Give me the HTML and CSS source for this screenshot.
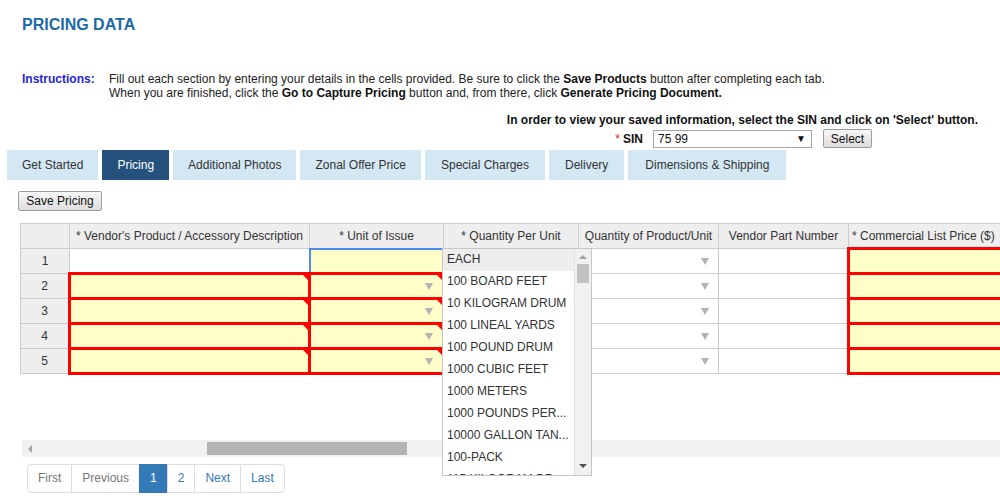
FILE: index.html
```html
<!DOCTYPE html>
<html>
<head>
<meta charset="utf-8">
<title>Pricing Data</title>
<link rel="stylesheet" href="styles.css">
</head>
<body>
<h1 class="title">PRICING DATA</h1>

<div class="instructions">
  <div class="instr-label">Instructions:</div>
  <div class="instr-text">Fill out each section by entering your details in the cells provided. Be sure to click the <b>Save Products</b> button after completing each tab.<br>When you are finished, click the <b>Go to Capture Pricing</b> button and, from there, click <b>Generate Pricing Document.</b></div>
</div>

<div class="view-note">In order to view your saved information, select the SIN and click on 'Select' button.</div>
<div class="sin-row">
  <span class="req-star">*</span><span class="sin-label">SIN</span>
  <div class="fake-select"><span>75 99</span><span class="sel-arrow">&#9660;</span></div>
  <button class="btn select-btn">Select</button>
</div>

<nav class="tabs">
  <div class="tab">Get Started</div>
  <div class="tab active">Pricing</div>
  <div class="tab">Additional Photos</div>
  <div class="tab">Zonal Offer Price</div>
  <div class="tab wide">Special Charges</div>
  <div class="tab wide">Delivery</div>
  <div class="tab wider">Dimensions &amp; Shipping</div>
</nav>

<button class="btn save-btn">Save Pricing</button>

<div class="grid">
  <div class="grid-view">
    <table>
      <colgroup>
        <col class="c-num"><col class="c-desc"><col class="c-unit"><col class="c-qpu"><col class="c-qpp"><col class="c-vpn"><col class="c-price">
      </colgroup>
      <thead>
        <tr>
          <th></th>
          <th>* Vendor's Product / Accessory Description</th>
          <th>* Unit of Issue</th>
          <th>* Quantity Per Unit</th>
          <th>Quantity of Product/Unit</th>
          <th>Vendor Part Number</th>
          <th>* Commercial List Price ($)</th>
        </tr>
      </thead>
      <tbody>
        <tr>
          <td class="num">1</td>
          <td></td>
          <td class="sel"></td>
          <td></td>
          <td><div class="dd-cell"><span class="dd-arrow"></span></div></td>
          <td></td>
          <td class="req"></td>
        </tr>
        <tr>
          <td class="num">2</td>
          <td class="req"></td>
          <td class="req"><div class="dd-cell"><span class="dd-arrow"></span></div></td>
          <td></td>
          <td><div class="dd-cell"><span class="dd-arrow"></span></div></td>
          <td></td>
          <td class="req"></td>
        </tr>
        <tr>
          <td class="num">3</td>
          <td class="req"></td>
          <td class="req"><div class="dd-cell"><span class="dd-arrow"></span></div></td>
          <td></td>
          <td><div class="dd-cell"><span class="dd-arrow"></span></div></td>
          <td></td>
          <td class="req"></td>
        </tr>
        <tr>
          <td class="num">4</td>
          <td class="req"></td>
          <td class="req"><div class="dd-cell"><span class="dd-arrow"></span></div></td>
          <td></td>
          <td><div class="dd-cell"><span class="dd-arrow"></span></div></td>
          <td></td>
          <td class="req"></td>
        </tr>
        <tr>
          <td class="num">5</td>
          <td class="req"></td>
          <td class="req"><div class="dd-cell"><span class="dd-arrow"></span></div></td>
          <td></td>
          <td><div class="dd-cell"><span class="dd-arrow"></span></div></td>
          <td></td>
          <td class="req"></td>
        </tr>
      </tbody>
    </table>
  </div>
  <div class="hscroll"><span class="hs-arrow"></span><div class="hs-thumb"></div></div>

  <div class="dropdown">
    <ul class="dd-list">
      <li class="dd-item hl">EACH</li>
      <li class="dd-item">100 BOARD FEET</li>
      <li class="dd-item">10 KILOGRAM DRUM</li>
      <li class="dd-item">100 LINEAL YARDS</li>
      <li class="dd-item">100 POUND DRUM</li>
      <li class="dd-item">1000 CUBIC FEET</li>
      <li class="dd-item">1000 METERS</li>
      <li class="dd-item">1000 POUNDS PER...</li>
      <li class="dd-item">10000 GALLON TAN...</li>
      <li class="dd-item">100-PACK</li>
      <li class="dd-item">115 KILOGRAM DR...</li>
    </ul>
    <div class="dd-scroll">
      <span class="vs-up"></span>
      <span class="vs-thumb"></span>
      <span class="vs-down"></span>
    </div>
  </div>
</div>

<ul class="pager">
  <li><span class="pg disabled first">First</span></li>
  <li><span class="pg disabled">Previous</span></li>
  <li><span class="pg active">1</span></li>
  <li><span class="pg">2</span></li>
  <li><span class="pg">Next</span></li>
  <li><span class="pg last">Last</span></li>
</ul>
</body>
</html>
```

FILE: styles.css
```css
* { box-sizing: border-box; }

html, body { overflow: hidden; }

body {
  margin: 0;
  font-family: "Liberation Sans", Arial, sans-serif;
  font-size: 12px;
  color: #333;
  background: #fff;
}

.title {
  margin: 0;
  padding: 15px 22px 0;
  font-size: 16px;
  line-height: 20px;
  font-weight: bold;
  color: #1b6aa6;
}

.instructions {
  display: flex;
  margin-top: 37px;
  padding-left: 22px;
  line-height: 14px;
}

.instr-label {
  width: 87px;
  flex: none;
  color: #2525d9;
  font-weight: bold;
}

.instr-text { color: #222; }
.instr-text b { color: #111; }

.view-note {
  margin-top: 13px;
  padding-right: 22px;
  text-align: right;
  font-weight: bold;
  color: #111;
  line-height: 14px;
}

.sin-row {
  display: flex;
  justify-content: flex-end;
  align-items: center;
  height: 19px;
  margin-top: 2px;
  padding-right: 128px;
}

.req-star { color: #e02020; margin-right: 3px; }
.sin-label { font-weight: bold; color: #111; margin-right: 10px; }

.fake-select {
  width: 159px;
  height: 18px;
  border: 1px solid #a6a6a6;
  background: #fff;
  display: flex;
  align-items: center;
  justify-content: space-between;
  padding: 0 5px 0 4px;
  color: #111;
}

.sel-arrow { font-size: 10px; color: #111; }

.btn {
  font-family: inherit;
  font-size: 12px;
  color: #111;
  border: 1px solid #9d9d9d;
  border-radius: 2px;
  background: linear-gradient(#f7f7f7, #dddddd);
  padding: 0;
}

.select-btn { width: 49px; height: 19px; margin-left: 11px; }

.tabs {
  display: flex;
  gap: 4px;
  margin-top: 2px;
  padding-left: 7px;
}

.tab {
  height: 30px;
  line-height: 30px;
  padding: 0 15px;
  background: #d4e8f4;
  color: #333;
}

.tab.wide { padding: 0 16px; }
.tab.wider { padding: 0 17px; }

.tab.active { background: #24527c; color: #fff; }

.save-btn {
  display: block;
  margin: 11px 0 0 18px;
  width: 84px;
  height: 20px;
}

.grid {
  position: relative;
  margin: 12px 0 0 20px;
  height: 234px;
  display: flex;
  flex-direction: column;
}

.grid-view { flex: 1; overflow: hidden; }

table {
  border-collapse: collapse;
  table-layout: fixed;
  width: 1010px;
}

.c-num { width: 49px; }
.c-desc { width: 240px; }
.c-unit { width: 134px; }
.c-qpu { width: 135px; }
.c-qpp { width: 140px; }
.c-vpn { width: 130px; }
.c-price { width: 182px; }

th {
  height: 25px;
  background: #eee;
  border: 1px solid #ccc;
  font-weight: normal;
  color: #333;
  padding: 0 3px;
  white-space: nowrap;
  overflow: hidden;
  text-align: center;
}

th:last-child { text-align: left; }

td {
  height: 25px;
  border: 1px solid #ccc;
  padding: 0;
  background: #fff;
}

td.num { background: #eee; text-align: center; color: #333; }

td.req {
  position: relative;
  background: #fffdc8;
  border: 3px solid #ff0000;
}

td.req::after {
  content: "";
  position: absolute;
  top: 0;
  right: 0;
  border-top: 5px solid #ff0000;
  border-left: 5px solid transparent;
}

td.sel {
  background: #fffdc8;
  border: 2px solid #4a8ee8;
}

.dd-cell {
  display: flex;
  justify-content: flex-end;
  align-items: center;
  height: 100%;
  padding-right: 9px;
}

.dd-arrow {
  width: 0;
  height: 0;
  border-left: 4px solid transparent;
  border-right: 4px solid transparent;
  border-top: 7px solid #b3b3b3;
}

.hscroll {
  height: 17px;
  margin-left: 2px;
  background: #f1f1f1;
  display: flex;
  align-items: center;
}

.hs-arrow {
  margin-left: 6px;
  width: 0;
  height: 0;
  border-top: 4px solid transparent;
  border-bottom: 4px solid transparent;
  border-right: 4px solid #a3a3a3;
}

.hs-thumb {
  margin-left: 175px;
  width: 200px;
  height: 13px;
  background: #b3b3b3;
}

.dropdown {
  position: absolute;
  left: 422px;
  top: 25px;
  width: 150px;
  height: 228px;
  border: 1px solid #c6c6c6;
  background: #fff;
  display: flex;
  overflow: hidden;
}

.dd-list {
  flex: 1;
  margin: 0;
  padding: 0;
  list-style: none;
  overflow: hidden;
}

.dd-item {
  height: 22px;
  line-height: 20px;
  padding-left: 4px;
  white-space: nowrap;
  color: #333;
}

.dd-item.hl { background: #eee; }

.dd-scroll {
  width: 17px;
  flex: none;
  background: #f1f1f1;
  border-left: 1px solid #e2e2e2;
  display: flex;
  flex-direction: column;
  align-items: center;
}

.vs-up {
  margin-top: 6px;
  width: 0;
  height: 0;
  border-left: 4px solid transparent;
  border-right: 4px solid transparent;
  border-bottom: 4px solid #a3a3a3;
}

.vs-thumb {
  margin-top: 5px;
  width: 12px;
  height: 19px;
  background: #c1c1c1;
}

.vs-down {
  margin-top: auto;
  margin-bottom: 7px;
  width: 0;
  height: 0;
  border-left: 4px solid transparent;
  border-right: 4px solid transparent;
  border-top: 4px solid #505050;
}

.pager {
  display: flex;
  list-style: none;
  margin: 7px 0 0 27px;
  padding: 0;
}

.pg {
  display: block;
  margin-left: -1px;
  padding: 5px 10px;
  line-height: 17px;
  border: 1px solid #ddd;
  color: #337ab7;
  background: #fff;
}

.pg.first { margin-left: 0; border-radius: 4px 0 0 4px; }
.pg.last { border-radius: 0 4px 4px 0; }
.pg.disabled { color: #777; }
.pg.active { background: #337ab7; border-color: #337ab7; color: #fff; }
```
